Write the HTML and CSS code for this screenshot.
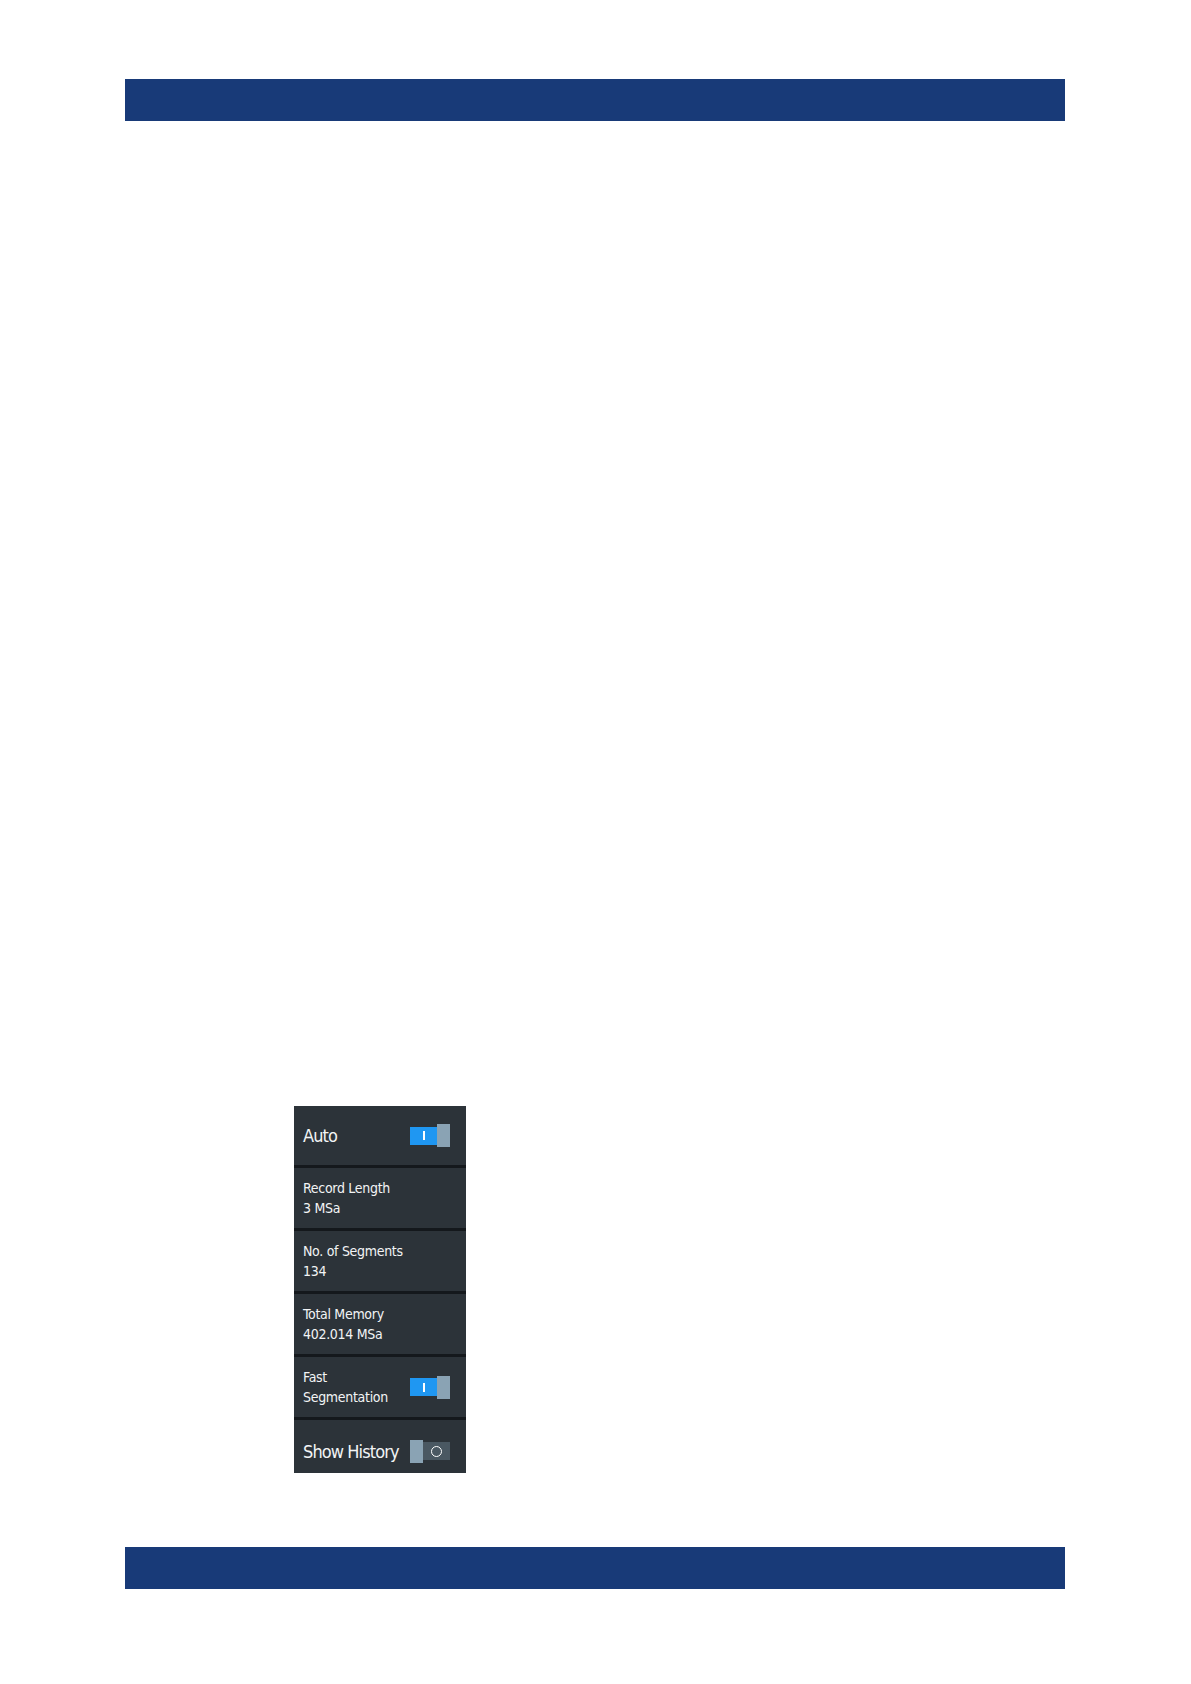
FILE: index.html
```html
<!DOCTYPE html>
<html>
<head>
<meta charset="utf-8">
<link rel="stylesheet" href="styles.css">
</head>
<body>
<div class="page">
  <div class="band band-top"></div>
  <main class="content">
    <div class="panel">
      <div class="row row-first">
        <span class="label big">Auto</span>
        <span class="toggle on"><span class="track"><span class="mark-i"></span></span><span class="knob"></span></span>
      </div>
      <div class="row">
        <div class="label two"><div>Record Length</div><div>3 MSa</div></div>
      </div>
      <div class="row">
        <div class="label two"><div>No. of Segments</div><div>134</div></div>
      </div>
      <div class="row">
        <div class="label two"><div>Total Memory</div><div>402.014 MSa</div></div>
      </div>
      <div class="row">
        <div class="label two"><div>Fast</div><div>Segmentation</div></div>
        <span class="toggle on"><span class="track"><span class="mark-i"></span></span><span class="knob"></span></span>
      </div>
      <div class="row row-last">
        <span class="label big">Show History</span>
        <span class="toggle off"><span class="knob"></span><span class="track"><span class="mark-o"></span></span></span>
      </div>
    </div>
  </main>
  <div class="band band-bottom"></div>
</div>
</body>
</html>
```
FILE: styles.css
```css
html, body {
  margin: 0;
  padding: 0;
  background: #ffffff;
}
.page {
  width: 940px;
  margin-left: 125px;
  padding-top: 79px;
}
.band {
  height: 42px;
  background: #183a78;
}
.content {
  display: block;
  padding-top: 985px;
  padding-left: 169px;
}
.band-bottom {
  margin-top: 74px;
}
.panel {
  width: 172px;
  background: #2c3339;
  font-family: "DejaVu Sans Condensed", "Liberation Sans", Arial, sans-serif;
  color: #f2f4f5;
}
.row {
  height: 60px;
  border-bottom: 3px solid #14181c;
  display: flex;
  align-items: center;
  justify-content: space-between;
  padding: 0 16px 0 9px;
}
.row-first {
  height: 59px;
}
.row-last {
  height: 44px;
  padding-top: 9px;
  border-bottom: none;
}
.label {
  white-space: nowrap;
}
.big {
  font-size: 18px;
  letter-spacing: -0.9px;
}
.two {
  font-size: 14px;
  line-height: 20px;
  letter-spacing: -0.3px;
}
.toggle {
  display: flex;
  align-items: center;
  width: 40px;
  height: 23px;
}
.toggle .knob {
  width: 13px;
  height: 23px;
  background: #8aa3b4;
}
.toggle.on .track {
  width: 27px;
  height: 18px;
  background: #1f97f2;
  display: flex;
  align-items: center;
  justify-content: center;
}
.toggle.off .track {
  width: 27px;
  height: 18px;
  background: #4a5862;
  display: flex;
  align-items: center;
  justify-content: center;
}
.mark-i {
  width: 2px;
  height: 9px;
  background: #ffffff;
}
.mark-o {
  width: 9px;
  height: 9px;
  border: 1.5px solid #ffffff;
  border-radius: 50%;
}
```
